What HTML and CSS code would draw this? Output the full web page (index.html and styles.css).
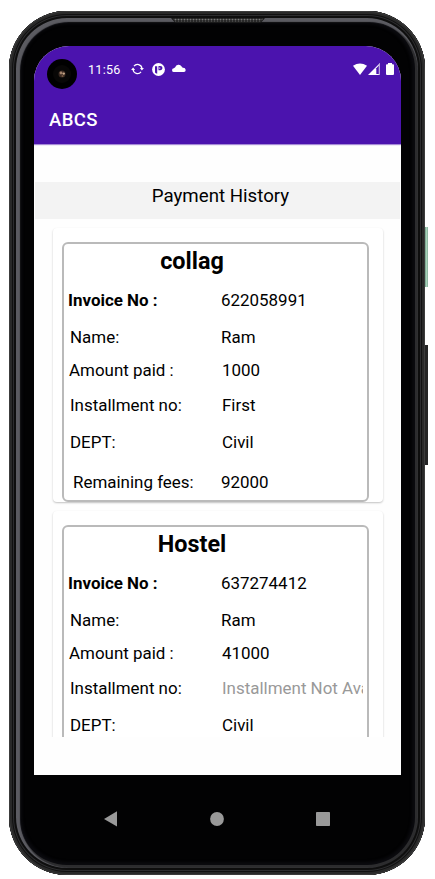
FILE: index.html
```
<!DOCTYPE html>
<html lang="en">
<head>
<meta charset="utf-8">
<title>ABCS</title>
<link rel="stylesheet" href="styles.css">
</head>
<body>
<div class="phone">
  <svg class="speaker" width="94" height="5" viewBox="0 0 94 5">
    <defs><pattern id="mesh" width="3" height="3" patternUnits="userSpaceOnUse"><rect width="3" height="3" fill="#222"/><circle cx="1.5" cy="1.5" r="1" fill="#777"/></pattern></defs>
    <path d="M0 0H94L91 3.5Q90 5 88 5H6Q4 5 3 3.5Z" fill="#1a1a1a"/>
    <path d="M2 .5H92L90 4H4Z" fill="url(#mesh)"/>
  </svg>
  <span class="side power"></span>
  <span class="side volume"></span>
  <div class="screen">
    <header class="top">
      <div class="status">
        <svg class="camera" width="30" height="30" viewBox="0 0 30 30"><circle cx="15" cy="15" r="15" fill="#000"/><circle cx="15" cy="15" r="9" fill="#080706"/><circle cx="15" cy="15" r="3.5" fill="#3a2a22"/><circle cx="14" cy="14" r="1.4" fill="#a08068"/><circle cx="16.7" cy="14.6" r="1.2" fill="#c8a888"/><circle cx="15.5" cy="17" r="1" fill="#765844"/></svg>
        <span class="time">11:56</span>
        <svg class="sync" width="13" height="12" viewBox="0 0 13 12"><g fill="none" stroke="#fff" stroke-width="1.3"><path d="M3 3.2A4.4 4.4 0 0 1 10.9 5.5"/><path d="M10 8.8A4.4 4.4 0 0 1 2.1 6.5"/></g><path d="M8.9 5h4L10.9 7.4ZM.1 7h4L2.1 4.6Z" fill="#fff"/></svg>
        <svg class="badge" width="13" height="13" viewBox="0 0 13 13"><circle cx="6.5" cy="6.5" r="6.4" fill="#fff"/><path d="M3 3.2H5.2V10.8Q3.6 10.3 3 9.4Z" fill="#4b13ae"/><path d="M6.5 3H8.4A1.8 1.8 0 0 1 8.4 7.2H6.5Z" fill="#4b13ae"/><path d="M7.3 4.4H8.2V5.8H7.3Z" fill="#fff"/></svg>
        <svg class="cloud" width="14" height="9" viewBox="0 0 14 9"><path d="M2 8A1.9 1.9 0 0 1 1.9 4.2L3.2 3.3A3.5 3.5 0 0 1 9.6 2.6L11 3.9A2.1 2.1 0 0 1 12 8Z" fill="#fff"/></svg>
        <svg class="signals" width="42" height="13" viewBox="0 0 42 13"><path d="M0 2.7Q7 -1.7 14 2.7L7 12Z" fill="#fff"/><path d="M15 12L27 0V12Z" fill="#fff"/><path d="M23.3 5.2L26 2.5V11H23.3Z" fill="#4b13ae"/><path d="M25.7 2V12H27V0Z" fill="#b9a0df"/><path d="M33 2Q33 1.2 34 1.2H35V0H39V1.2H40Q41 1.2 41 2V11Q41 12 40 12H34Q33 12 33 11Z" fill="#fff"/></svg>
      </div>
      <h1>ABCS</h1>
    </header>
    <main>
      <h2>Payment History</h2>
      <div class="list">
        <section class="card">
          <div class="sheet">
            <h3>collag</h3>
            <div class="row invoice"><b>Invoice No :</b><span>622058991</span></div>
            <div class="row name"><span>Name:</span><span>Ram</span></div>
            <div class="row amount"><span>Amount paid :</span><span>1000</span></div>
            <div class="row installment"><span>Installment no:</span><span>First</span></div>
            <div class="row dept"><span>DEPT:</span><span>Civil</span></div>
            <div class="row remaining"><span>Remaining fees:</span><span>92000</span></div>
          </div>
        </section>
        <section class="card">
          <div class="sheet">
            <h3>Hostel</h3>
            <div class="row invoice"><b>Invoice No :</b><span>637274412</span></div>
            <div class="row name"><span>Name:</span><span>Ram</span></div>
            <div class="row amount"><span>Amount paid :</span><span>41000</span></div>
            <div class="row installment"><span>Installment no:</span><span class="missing">Installment Not Ava</span></div>
            <div class="row dept"><span>DEPT:</span><span>Civil</span></div>
          </div>
        </section>
      </div>
    </main>
  </div>
  <nav>
    <svg width="14" height="16" viewBox="0 0 14 16"><path d="M0 8L13 .3V15.5Z" fill="#999"/></svg>
    <svg width="14" height="14" viewBox="0 0 14 14"><circle cx="7" cy="7" r="6.9" fill="#999"/></svg>
    <svg width="14" height="14" viewBox="0 0 14 14"><rect width="14" height="14" rx=".7" fill="#999"/></svg>
  </nav>
</div>
</body>
</html>
```
FILE: styles.css
```
* { box-sizing: border-box; }
body {
  margin: 0;
  padding: 11px 9px 0;
  height: 879px;
  overflow: hidden;
  background: #fff;
  font-family: Roboto, sans-serif;
  color: #000;
}
h1, h2, h3 { margin: 0; }
svg { display: block; flex: none; }
.phone {
  position: relative;
  width: 416px;
  height: 864px;
  padding: 35px 24px 0 25px;
  border-radius: 58px;
  background: #020203;
  box-shadow: inset 0 0 0 1px #3c3c3c, inset 0 0 0 3px #292929, inset 0 0 0 4px #111, inset 0 0 0 5px #2c2c2e, inset 0 0 0 7px #0e0e0e, inset 2px 2px 1px 9px #5b5b61, inset 0 0 0 10px #2c2c2e, inset 0 0 3px 13px #0b0b0f;
}
.speaker { position: absolute; left: 162px; top: 7px; }
.side { position: absolute; }
.power { left: 416px; top: 216px; width: 3px; height: 60px; background: linear-gradient(90deg, #6d9b84, #a9d2bb 50%, #83ad98); }
.volume { left: 416px; top: 334px; width: 3px; height: 120px; background: #252525; }
.screen {
  height: 729px;
  overflow: hidden;
  border-radius: 35px 35px 0 0;
  background: #fefefe;
}
.top {
  height: 98px;
  background: #4b13ae;
  box-shadow: 0 1px 1px #a58ad6;
  color: #fff;
}
.status { display: flex; height: 46px; padding: 13px 0 0 13px; }
.time { margin: 3px 0 0 11px; width: 43px; font-size: 12.5px; line-height: 16px; letter-spacing: .3px; }
.sync { margin-top: 4px; }
.badge { margin: 4px 0 0 8px; }
.cloud { margin: 5px 0 0 7px; }
.signals { margin: 4px 6px 0 auto; }
h1 { padding: 17px 0 0 15px; font-size: 18.5px; line-height: 22px; font-weight: 500; letter-spacing: .4px; }
main { padding: 38px 1px 0; }
h2 {
  height: 37px;
  padding-left: 6px;
  background: #f3f3f3;
  text-align: center;
  font-size: 18.7px;
  font-weight: 400;
  line-height: 28px;
}
.list { height: 518px; padding: 9px 17px 0 18px; overflow: hidden; }
.card {
  height: 274px;
  margin-bottom: 9px;
  padding: 14px 14px 0 9px;
  border-radius: 4px;
  background: #fff;
  box-shadow: 0 1px 2px #0000003d;
}
.sheet { height: 260px; border: 2px solid #bababa; border-radius: 6px; }
h3 { height: 36px; padding-right: 47px; text-align: center; font-size: 23.4px; line-height: 35px; font-weight: 700; }
.row {
  display: grid;
  grid-template-columns: 152px 1fr;
  align-items: center;
  padding: 0 4px 0 6px;
  font-size: 16.95px;
  line-height: 22px;
  white-space: nowrap;
}
.invoice { height: 40px; grid-template-columns: 153px 1fr; padding-left: 4px; }
.name { height: 34px; grid-template-columns: 151px 1fr; }
.amount { height: 32px; grid-template-columns: 153px 1fr; padding-left: 5px; }
.installment { height: 38px; }
.dept { height: 36px; }
.remaining { height: 40px; padding: 4px 4px 0 9px; grid-template-columns: 148px 1fr; }
.missing { overflow: hidden; color: #999; }
nav { display: flex; justify-content: space-between; align-items: center; height: 88px; padding: 0 71px 0 70px; }
```
